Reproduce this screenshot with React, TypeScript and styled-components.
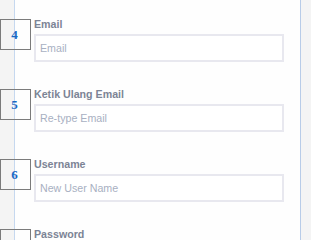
import React from "react";
import styled, { createGlobalStyle } from "styled-components";

const Global = createGlobalStyle`
  html, body { margin: 0; padding: 0; overflow: hidden; }
  body { font-family: "Liberation Sans", Arial, sans-serif; background: #f4f4f4; }
`;

const Page = styled.div`
  display: flex;
  min-height: 100vh;
  background: #f4f4f4;
`;

const Gutter = styled.div<{ $w: number }>`
  flex: 0 0 ${(p) => p.$w}px;
`;

const Main = styled.div`
  flex: 0 0 287px;
  background: #fefefe;
  border-left: 1px solid #c6d8ef;
  border-right: 1px solid #b8cce8;
  padding: 17px 0 0 19px;
  box-sizing: border-box;
  display: flex;
  flex-direction: column;
  gap: 25px;
`;

const Row = styled.div`
  position: relative;
  display: flex;
  flex-direction: column;
  gap: 3px;
  width: 250px;
`;

const Step = styled.div`
  position: absolute;
  left: -34px;
  top: 2px;
  width: 31px;
  height: 31px;
  box-sizing: border-box;
  border: 1px solid #7b7b7b;
  display: flex;
  align-items: center;
  justify-content: center;
  padding-right: 2px;
  padding-top: 1px;
  font-family: "Liberation Serif", "Times New Roman", serif;
  font-weight: bold;
  font-size: 13px;
  color: #1769c4;
`;

const Label = styled.label`
  font-size: 10.67px;
  line-height: 14px;
  font-weight: bold;
  color: #7c8495;
`;

const Input = styled.input`
  box-sizing: border-box;
  width: 250px;
  height: 28px;
  border: 2px solid #e8e8ef;
  background: #fff;
  padding: 0 0 0 4px;
  font-family: "Liberation Sans", Arial, sans-serif;
  font-size: 10.67px;
  color: #333;
  outline: none;
  &::placeholder { color: #a8b0c2; }
`;

const fields = [
  { n: 4, label: "Email", ph: "Email" },
  { n: 5, label: "Ketik Ulang Email", ph: "Re-type Email" },
  { n: 6, label: "Username", ph: "New User Name" },
  { n: 7, label: "Password", ph: "Password" },
];

export default function App() {
  return (
    <>
      <Global />
      <Page>
        <Gutter $w={14} />
        <Main>
          {fields.map((f) => (
            <Row key={f.n}>
              <Step>{f.n}</Step>
              <Label>{f.label}</Label>
              <Input placeholder={f.ph} />
            </Row>
          ))}
        </Main>
        <Gutter $w={8} />
      </Page>
    </>
  );
}
